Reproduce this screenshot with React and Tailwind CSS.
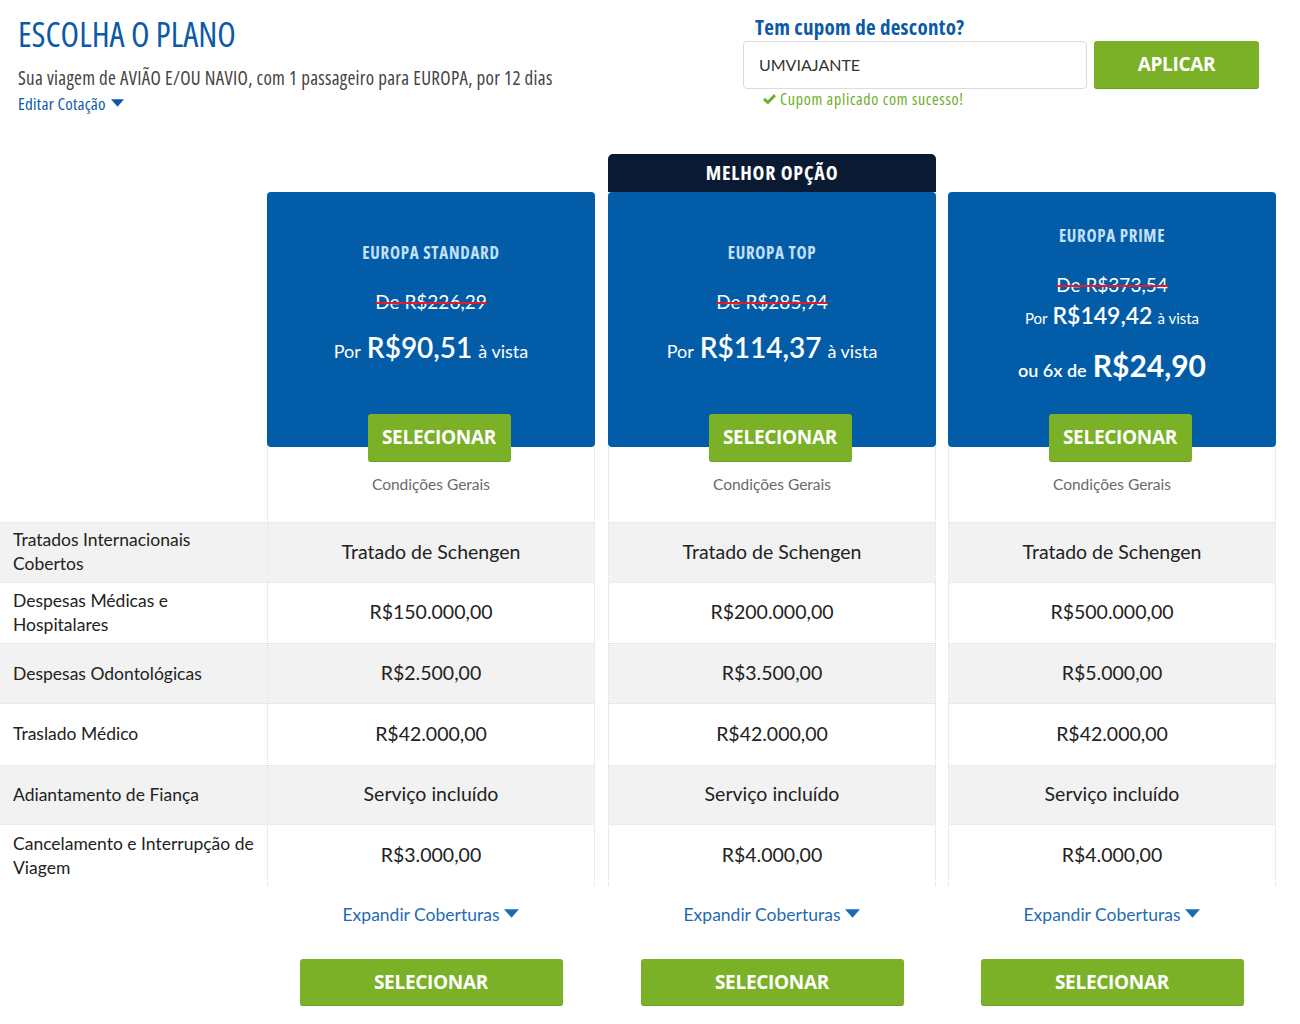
import React from "react";

const COND = "font-['Open_Sans',Roboto,sans-serif] font-stretch-[75%]";
const BTN = "font-['Open_Sans',Roboto,sans-serif]";
const BODY = "font-[Lato,'Open_Sans',sans-serif]";

const labels = [
  "Tratados Internacionais Cobertos",
  "Despesas Médicas e Hospitalares",
  "Despesas Odontológicas",
  "Traslado Médico",
  "Adiantamento de Fiança",
  "Cancelamento e Interrupção de Viagem",
];

const plans = [
  {
    name: "EUROPA STANDARD",
    de: "De R$226,29",
    por: "R$90,51",
    values: ["Tratado de Schengen", "R$150.000,00", "R$2.500,00", "R$42.000,00", "Serviço incluído", "R$3.000,00"],
  },
  {
    name: "EUROPA TOP",
    de: "De R$285,94",
    por: "R$114,37",
    best: true,
    values: ["Tratado de Schengen", "R$200.000,00", "R$3.500,00", "R$42.000,00", "Serviço incluído", "R$4.000,00"],
  },
  {
    name: "EUROPA PRIME",
    de: "De R$373,54",
    por: "R$149,42",
    parcel: "R$24,90",
    values: ["Tratado de Schengen", "R$500.000,00", "R$5.000,00", "R$42.000,00", "Serviço incluído", "R$4.000,00"],
  },
];

function Caret({ className }) {
  return (
    <svg viewBox="0 0 14 8" className={className} aria-hidden="true">
      <polygon points="0,0 14,0 7,8" fill="currentColor" />
    </svg>
  );
}

function Check() {
  return (
    <svg viewBox="0 0 16 14" className="w-[15px] h-[13px] text-[#6db02a]" aria-hidden="true">
      <path d="M1 7.5 L3.3 5.2 L6.2 8.1 L12.8 1.2 L15 3.4 L6.2 12.4 Z" fill="currentColor" />
    </svg>
  );
}

function CardBody({ plan }) {
  if (plan.parcel) {
    return (
      <div className="h-[255px] rounded-[4px] bg-[#035ca8] flex flex-col items-center pt-[35px]">
        <div className={`${COND} font-bold text-[17px] tracking-[0.7px] leading-[18px] text-[#c6e0f7]`}>{plan.name}</div>
        <div className={`${BODY} mt-[28px] text-[19px] leading-[24px] text-white line-through decoration-[#e11b2b] decoration-2`}>
          {plan.de}
        </div>
        <div className={`${BODY} mt-[4px] leading-[28px] text-white flex items-baseline gap-[5px]`}>
          <span className="text-[15px]">Por</span>
          <span className="text-[23px] font-semibold">{plan.por}</span>
          <span className="text-[15px]">à vista</span>
        </div>
        <div className={`${BODY} mt-[13px] leading-[40px] text-white flex items-baseline gap-[6px]`}>
          <span className="text-[18px] font-semibold">ou 6x de</span>
          <span className="text-[30px] font-bold">{plan.parcel}</span>
        </div>
      </div>
    );
  }
  return (
    <div className="h-[255px] rounded-[4px] bg-[#035ca8] flex flex-col items-center pt-[52px]">
      <div className={`${COND} font-bold text-[17px] tracking-[0.7px] leading-[18px] text-[#c6e0f7]`}>{plan.name}</div>
      <div className={`${BODY} mt-[28px] text-[19px] leading-[24px] text-white line-through decoration-[#e11b2b] decoration-2`}>
        {plan.de}
      </div>
      <div className={`${BODY} mt-[15px] leading-[36px] text-white flex items-baseline gap-[6px]`}>
        <span className="text-[18px]">Por</span>
        <span className="text-[28px] font-semibold">{plan.por}</span>
        <span className="text-[18px]">à vista</span>
      </div>
    </div>
  );
}

function PlanColumn({ plan, idx }) {
  const ml = idx === 0 ? "" : idx === 1 ? "ml-[13px]" : "ml-[12px]";
  return (
    <div className={`w-[328px] flex flex-col ${ml}`}>
      {plan.best ? (
        <div className="h-[38px] rounded-t-[5px] bg-[#0a1a33] flex items-center justify-center">
          <span className={`${COND} font-bold text-[20px] tracking-[0.8px] text-white`}>MELHOR OPÇÃO</span>
        </div>
      ) : (
        <div className="h-[38px]" />
      )}
      <CardBody plan={plan} />
      <div className="border-x border-dotted border-[#d6d6d6] flex flex-col">
        <div className="h-[75px] flex flex-col items-center">
          <button className={`${BTN} -mt-[33px] ml-[16px] w-[143px] h-[48px] rounded-[3px] bg-[#7ab127] border-b border-[#6a9e1f] text-white font-bold text-[19px] tracking-[-0.3px]`}>
            SELECIONAR
          </button>
          <div className={`${BODY} mt-[12px] text-[15.5px] leading-[20px] text-[#6a6a6a]`}>Condições Gerais</div>
        </div>
        {plan.values.map((v, i) => (
          <div
            key={i}
            className={`h-[60.67px] flex items-center justify-center pb-[2px] ${BODY} text-[19.5px] text-[#222] ${
              i % 2 === 0 ? "bg-[#f1f2f1] border-y border-dotted border-[#e4e6e4]" : "bg-white"
            }`}
          >
            {v}
          </div>
        ))}
      </div>
      <div className={`${BODY} mt-[17px] h-[24px] flex items-center justify-center gap-[5px] text-[17.5px] text-[#1f6bb3]`}>
        <span>Expandir Coberturas</span>
        <Caret className="w-[15px] h-[9px] mb-[3px]" />
      </div>
      <div className="mt-[32px] flex justify-center">
        <button className={`${BTN} w-[263px] h-[47px] rounded-[3px] bg-[#7ab127] border-b border-[#6a9e1f] text-white font-bold text-[19px] tracking-[-0.3px]`}>
          SELECIONAR
        </button>
      </div>
    </div>
  );
}

export default function App() {
  return (
    <div className="w-[1300px] h-[1024px] bg-white overflow-hidden">
      <div className="h-[154px] flex">
        <div className="w-[743px] pl-[18px] pt-[16px]">
          <h1 className={`${COND} text-[34px] leading-[36px] text-[#0b5aa8]`}>ESCOLHA O PLANO</h1>
          <p className={`${COND} mt-[15px] text-[19px] tracking-[0.3px] leading-[22px] text-[#444]`}>
            Sua viagem de AVIÃO E/OU NAVIO, com 1 passageiro para EUROPA, por 12 dias
          </p>
          <div className={`${COND} mt-[5px] flex items-center gap-[5px] text-[17px] tracking-[0.25px] leading-[20px] text-[#0b5aa8]`}>
            <span>Editar Cotação</span>
            <Caret className="w-[13px] h-[8px] mb-[2px]" />
          </div>
        </div>
        <div className="pt-[15px]">
          <div className={`${COND} pl-[12px] font-bold text-[21px] tracking-[0.3px] leading-[24px] text-[#0b5aa8]`}>Tem cupom de desconto?</div>
          <div className="mt-[2px] flex gap-[7px]">
            <div className="w-[344px] h-[48px] rounded-[4px] border border-[#dcdcdc] flex items-center pl-[15px]">
              <span className={`${BODY} text-[16px] text-[#333]`}>UMVIAJANTE</span>
            </div>
            <button className={`${BTN} w-[165px] h-[48px] rounded-[3px] bg-[#7ab127] border-b border-[#6a9e1f] text-white font-bold text-[19px] tracking-[-0.3px]`}>
              APLICAR
            </button>
          </div>
          <div className="mt-[1px] pl-[19px] h-[18px] flex items-center gap-[3px]">
            <Check />
            <span className={`${COND} text-[16px] tracking-[0.7px] text-[#6aae25]`}>Cupom aplicado com sucesso!</span>
          </div>
        </div>
      </div>

      <div className="flex">
        <div className="w-[267px] flex flex-col">
          <div className="h-[368px]" />
          {labels.map((l, i) => (
            <div
              key={i}
              className={`h-[60.67px] flex items-center pl-[13px] pr-[8px] ${BODY} text-[17.5px] leading-[24px] text-[#222] ${
                i % 2 === 0 ? "bg-[#f1f2f1] border-y border-dotted border-[#e4e6e4]" : "bg-white"
              }`}
            >
              {l}
            </div>
          ))}
        </div>
        {plans.map((p, i) => (
          <PlanColumn key={i} plan={p} idx={i} />
        ))}
      </div>
    </div>
  );
}
